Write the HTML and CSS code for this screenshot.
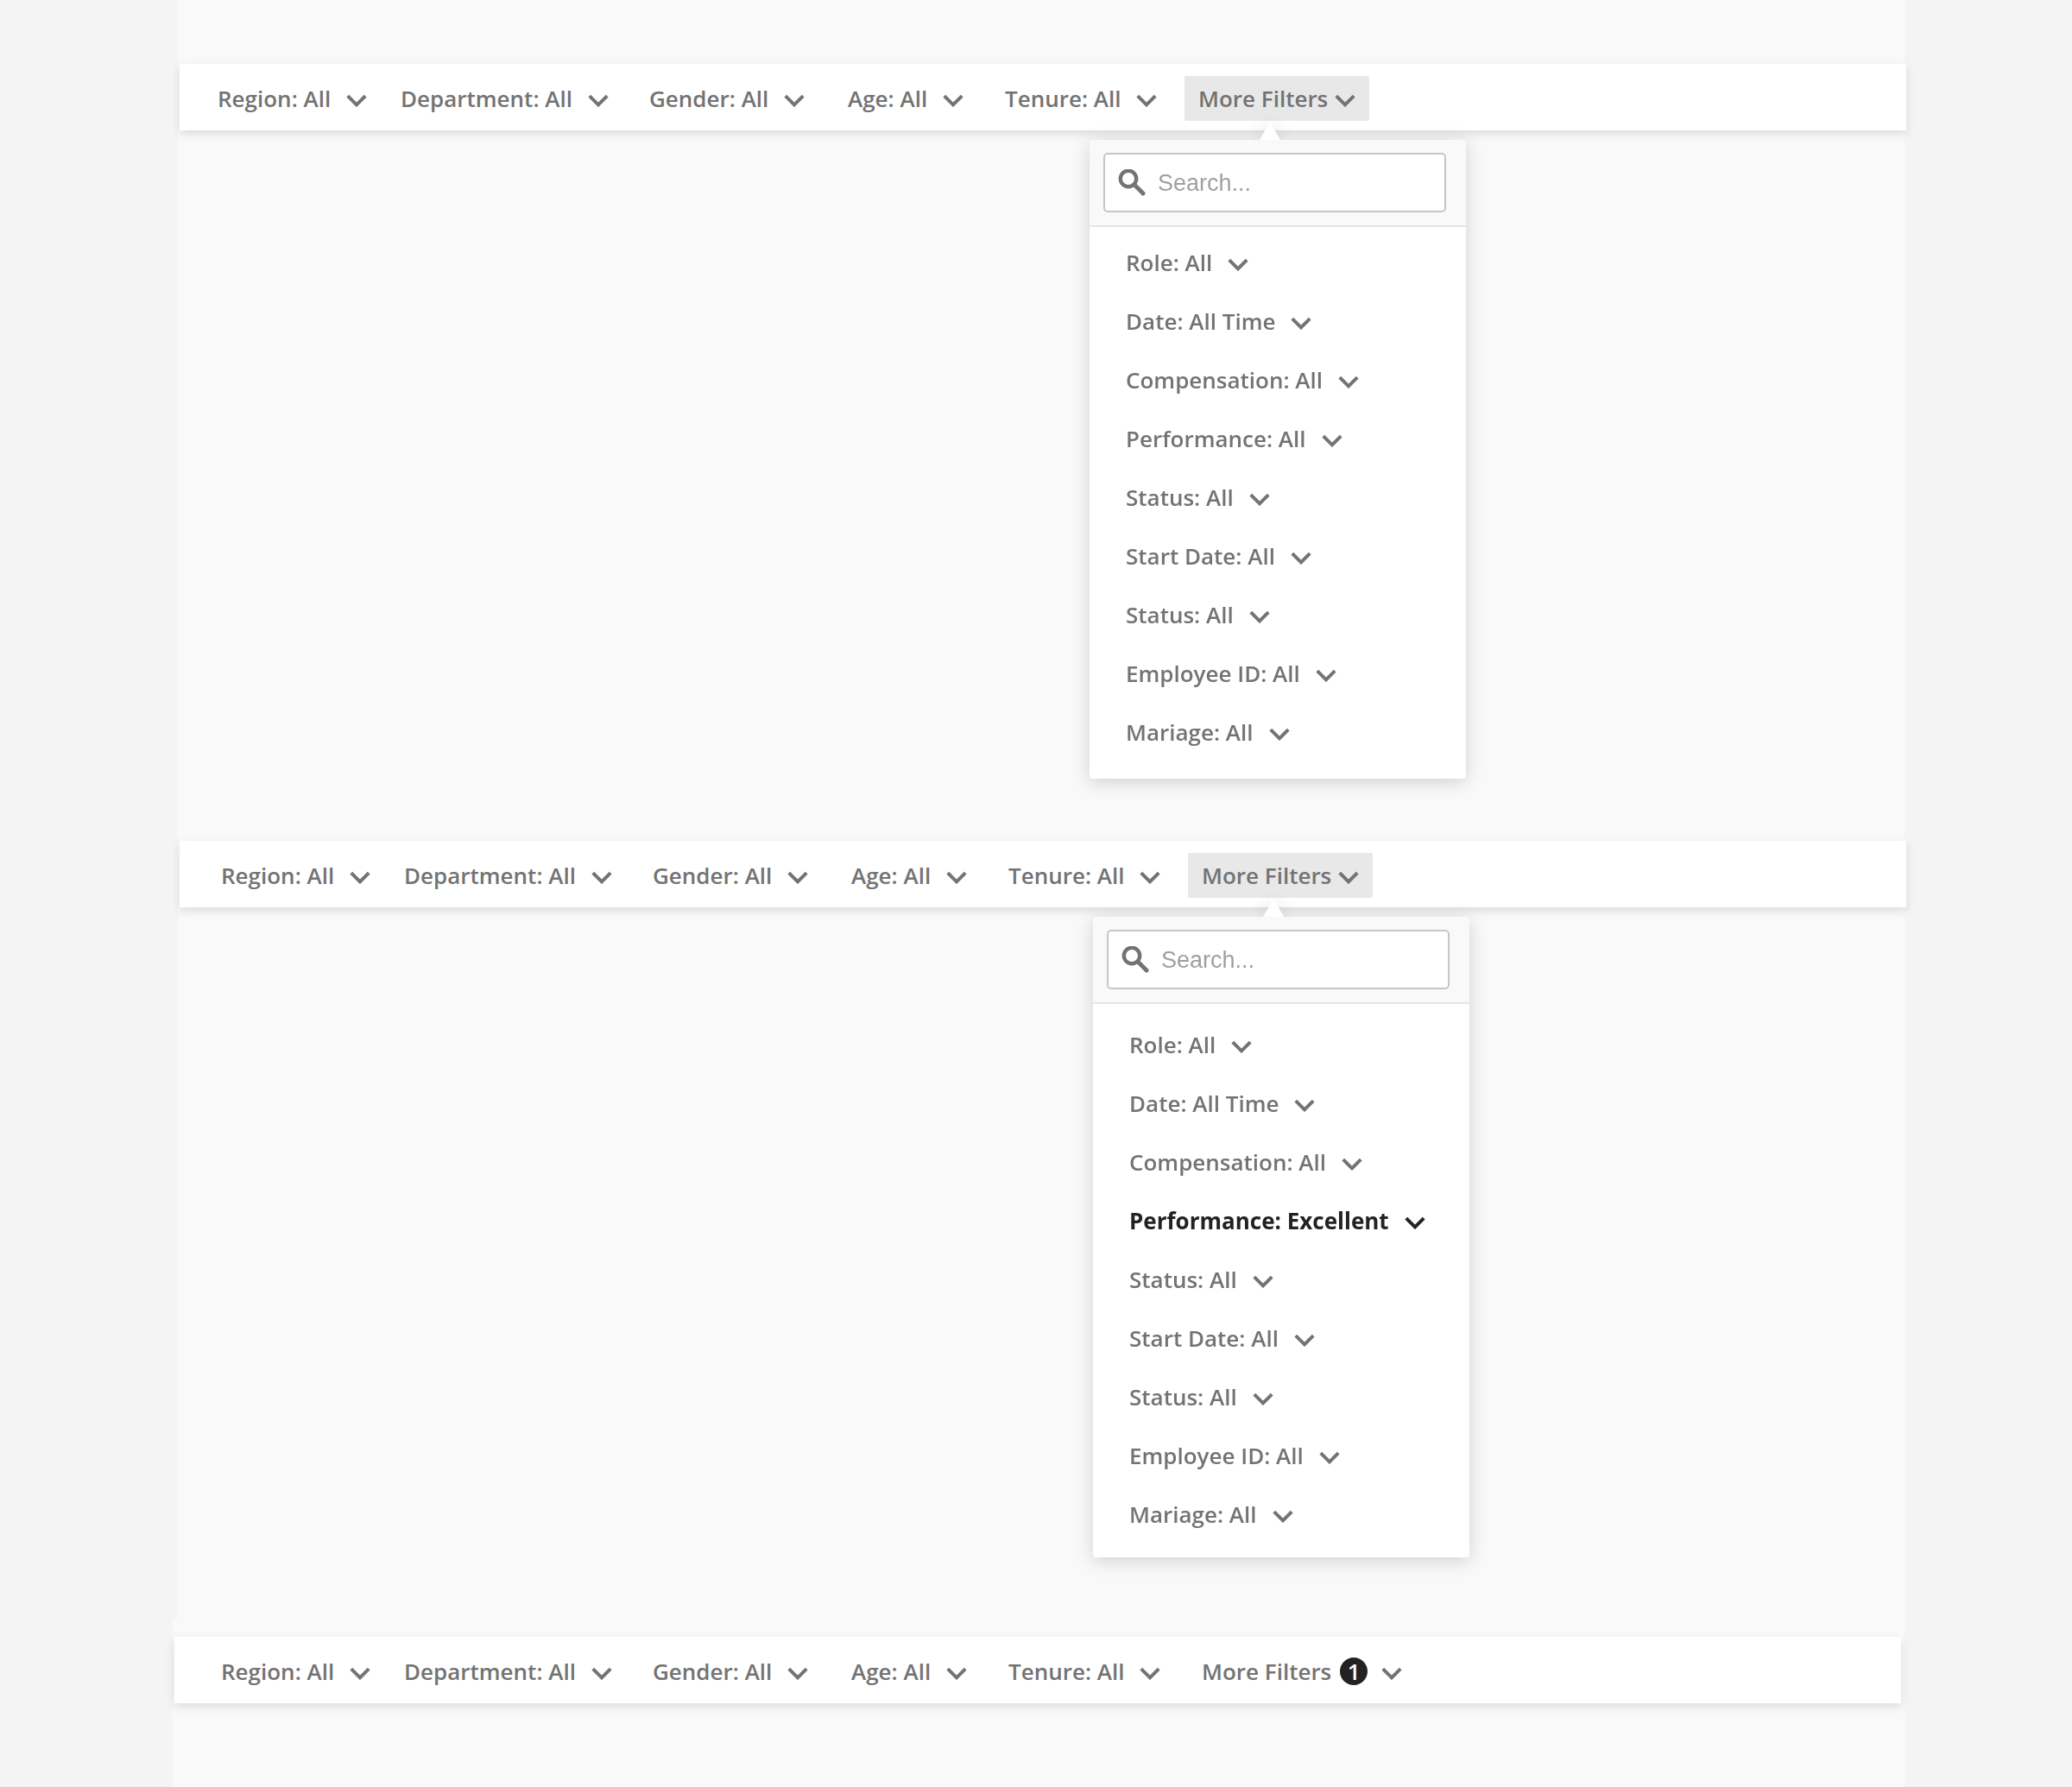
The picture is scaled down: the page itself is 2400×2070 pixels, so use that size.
FILE: index.html
```html
<!DOCTYPE html>
<html lang="en">
<head>
<meta charset="utf-8">
<title>Filter bar</title>
<link rel="stylesheet" href="styles.css">
</head>
<body>
<svg class="sprite" aria-hidden="true">
  <symbol id="chevron" viewBox="0 -6 24 20"><path d="M1.8 1.2 12 11.3 22.2 1.2" fill="none" stroke="currentColor" stroke-width="4"/></symbol>
  <symbol id="search" viewBox="0 0 32 32"><circle cx="12" cy="11" r="9.2" fill="none" stroke="currentColor" stroke-width="4.4"/><path d="M19 18 29 28" fill="none" stroke="currentColor" stroke-width="5" stroke-linecap="round"/></symbol>
</svg>
<main class="page">
  <section class="example">
    <nav class="bar" aria-label="Filters">
      <button class="filter">Region: All<svg class="chevron"><use href="#chevron"/></svg></button>
      <button class="filter">Department: All<svg class="chevron"><use href="#chevron"/></svg></button>
      <button class="filter">Gender: All<svg class="chevron"><use href="#chevron"/></svg></button>
      <button class="filter">Age: All<svg class="chevron"><use href="#chevron"/></svg></button>
      <button class="filter">Tenure: All<svg class="chevron"><use href="#chevron"/></svg></button>
      <button class="filter more open" aria-expanded="true">More Filters<svg class="chevron"><use href="#chevron"/></svg></button>
    </nav>
    <div class="menu">
      <div class="menu-head">
        <label class="search"><svg class="search-icon"><use href="#search"/></svg><input type="text" placeholder="Search..." aria-label="Search filters"></label>
      </div>
      <ul class="menu-list">
        <li><button class="filter">Role: All<svg class="chevron"><use href="#chevron"/></svg></button></li>
        <li><button class="filter">Date: All Time<svg class="chevron"><use href="#chevron"/></svg></button></li>
        <li><button class="filter">Compensation: All<svg class="chevron"><use href="#chevron"/></svg></button></li>
        <li><button class="filter">Performance: All<svg class="chevron"><use href="#chevron"/></svg></button></li>
        <li><button class="filter">Status: All<svg class="chevron"><use href="#chevron"/></svg></button></li>
        <li><button class="filter">Start Date: All<svg class="chevron"><use href="#chevron"/></svg></button></li>
        <li><button class="filter">Status: All<svg class="chevron"><use href="#chevron"/></svg></button></li>
        <li><button class="filter">Employee ID: All<svg class="chevron"><use href="#chevron"/></svg></button></li>
        <li><button class="filter">Mariage: All<svg class="chevron"><use href="#chevron"/></svg></button></li>
      </ul>
    </div>
  </section>

  <section class="example selected">
    <nav class="bar" aria-label="Filters">
      <button class="filter">Region: All<svg class="chevron"><use href="#chevron"/></svg></button>
      <button class="filter">Department: All<svg class="chevron"><use href="#chevron"/></svg></button>
      <button class="filter">Gender: All<svg class="chevron"><use href="#chevron"/></svg></button>
      <button class="filter">Age: All<svg class="chevron"><use href="#chevron"/></svg></button>
      <button class="filter">Tenure: All<svg class="chevron"><use href="#chevron"/></svg></button>
      <button class="filter more open" aria-expanded="true">More Filters<svg class="chevron"><use href="#chevron"/></svg></button>
    </nav>
    <div class="menu">
      <div class="menu-head">
        <label class="search"><svg class="search-icon"><use href="#search"/></svg><input type="text" placeholder="Search..." aria-label="Search filters"></label>
      </div>
      <ul class="menu-list">
        <li><button class="filter">Role: All<svg class="chevron"><use href="#chevron"/></svg></button></li>
        <li><button class="filter">Date: All Time<svg class="chevron"><use href="#chevron"/></svg></button></li>
        <li><button class="filter">Compensation: All<svg class="chevron"><use href="#chevron"/></svg></button></li>
        <li><button class="filter active">Performance: Excellent<svg class="chevron"><use href="#chevron"/></svg></button></li>
        <li><button class="filter">Status: All<svg class="chevron"><use href="#chevron"/></svg></button></li>
        <li><button class="filter">Start Date: All<svg class="chevron"><use href="#chevron"/></svg></button></li>
        <li><button class="filter">Status: All<svg class="chevron"><use href="#chevron"/></svg></button></li>
        <li><button class="filter">Employee ID: All<svg class="chevron"><use href="#chevron"/></svg></button></li>
        <li><button class="filter">Mariage: All<svg class="chevron"><use href="#chevron"/></svg></button></li>
      </ul>
    </div>
  </section>

  <section class="example collapsed">
    <nav class="bar" aria-label="Filters">
      <button class="filter">Region: All<svg class="chevron"><use href="#chevron"/></svg></button>
      <button class="filter">Department: All<svg class="chevron"><use href="#chevron"/></svg></button>
      <button class="filter">Gender: All<svg class="chevron"><use href="#chevron"/></svg></button>
      <button class="filter">Age: All<svg class="chevron"><use href="#chevron"/></svg></button>
      <button class="filter">Tenure: All<svg class="chevron"><use href="#chevron"/></svg></button>
      <button class="filter more">More Filters<span class="badge">1</span><svg class="chevron"><use href="#chevron"/></svg></button>
    </nav>
  </section>
</main>
</body>
</html>
```
FILE: styles.css
```css
* {
  box-sizing: border-box;
}

body {
  margin: 0;
  background: #f4f4f4;
  color: #737373;
  font: 600 26px/36px "Open Sans", sans-serif;
}

.sprite {
  display: none;
}

.page {
  display: flex;
  flex-direction: column;
  min-height: 100vh;
}

.example {
  margin: 0 194px 0 206px;
  padding: 74px 0 0 2px;
  background: #f9f9f9;
}

.example.selected {
  padding: 72px 0 70px 2px;
}

.example.collapsed {
  flex: 1;
  margin-left: 200px;
  padding: 22px 4px 0 2px;
}

.bar {
  display: grid;
  grid-template-columns: 212px 288px 230px 182px 208px max-content;
  margin-right: -2px;
  padding: 14px 0 11px 44px;
  background: #fff;
  box-shadow: 0 4px 10px rgba(0, 0, 0, 0.12);
}

.selected .bar {
  padding-left: 48px;
}

.collapsed .bar {
  margin-right: 0;
  padding-left: 54px;
}

.filter {
  display: flex;
  align-items: center;
  gap: 18px;
  height: 52px;
  padding: 0;
  border: 0;
  background: none;
  color: inherit;
  font: inherit;
  white-space: nowrap;
}

.more {
  gap: 8px;
  padding: 0 16px;
  border-radius: 2px;
}

.more.open {
  background: #e8e8e8;
}

.chevron {
  flex: none;
  width: 24px;
  height: 20px;
}

.badge {
  width: 32px;
  height: 32px;
  margin-left: 2px;
  border-radius: 50%;
  background: #222;
  color: #fff;
  line-height: 32px;
  text-align: center;
}

.badge + .chevron {
  margin-left: 8px;
}

.menu {
  position: relative;
  width: 436px;
  margin: 11px 0 0 1054px;
  border-radius: 4px;
  background: #fff;
  filter: drop-shadow(0 4px 10px rgba(0, 0, 0, 0.16));
}

.selected .menu {
  margin-left: 1058px;
}

.menu::before {
  content: "";
  position: absolute;
  left: 197px;
  bottom: 100%;
  width: 24px;
  height: 21px;
  background: #fff;
  clip-path: polygon(50% 0, 100% 100%, 0 100%);
}

.menu-head {
  padding: 15px 23px 15px 16px;
  border-bottom: 2px solid #e6e6e6;
  border-radius: 4px 4px 0 0;
  background: #f9f9f9;
}

.search {
  display: flex;
  align-items: center;
  gap: 14px;
  height: 69px;
  padding: 0 15px;
  border: 2px solid #c6c6c6;
  border-radius: 5px;
  background: #fff;
}

.search-icon {
  flex: none;
  width: 32px;
  height: 32px;
}

.search input {
  flex: 1;
  min-width: 0;
  padding: 0;
  border: 0;
  outline: 0;
  background: none;
  font: 27px/32px "Liberation Sans", Arial, sans-serif;
}

.search input::placeholder {
  color: #a0a0a0;
}

.menu-list {
  margin: 0;
  padding: 7px 0 20px 42px;
  list-style: none;
}

.selected .menu-list {
  padding: 13px 0 16px 42px;
}

.menu-list li {
  padding: 8px 0;
}

.active {
  color: #222;
  font-weight: 700;
}
```
